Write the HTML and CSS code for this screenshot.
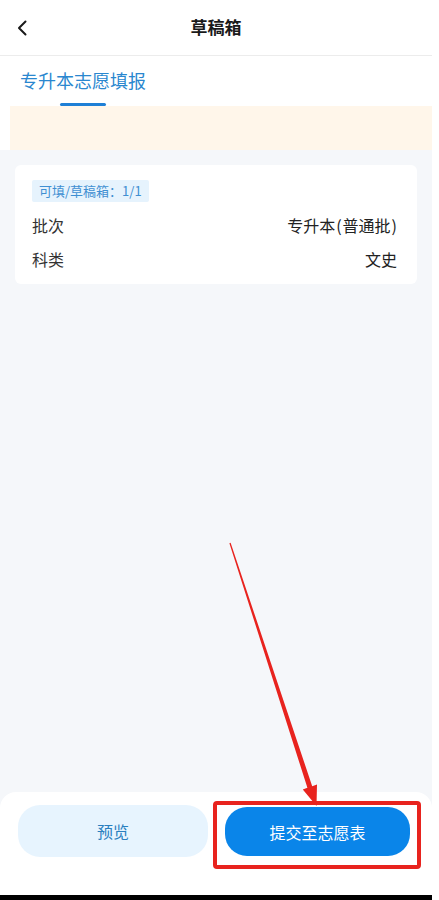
FILE: index.html
```html
<!DOCTYPE html>
<html lang="zh-CN">
<head>
    <meta charset="UTF-8">
    <meta name="viewport" content="width=device-width, initial-scale=1.0">
    <title>草稿箱</title>
    <link rel="stylesheet" href="styles.css">
</head>
<body>
    <div id="main">
        <div class="header">
            <div class="back">
                <svg width="10" height="16" viewBox="0 0 10 16"><path d="M8.5 1.5 L2 8 L8.5 14.5" fill="none" stroke="#1a1a1a" stroke-width="2" stroke-linecap="round" stroke-linejoin="round"/></svg>
            </div>
            <p class="title">草稿箱</p>
        </div>
        <div class="tabs">
            <div class="tab">
                <p>专升本志愿填报</p>
                <span class="line"></span>
            </div>
        </div>
        <div class="notice"></div>
        <div class="body">
            <div class="content">
                <div class="card">
                    <span class="tag">可填/草稿箱：1/1</span>
                    <div class="row">
                        <p>批次</p>
                        <p class="val">专升本<span class="pr">(</span>普通批<span class="pr end">)</span></p>
                    </div>
                    <div class="row">
                        <p>科类</p>
                        <p class="val">文史</p>
                    </div>
                </div>
            </div>
            <div class="footer">
                <button class="btn preview">预览</button>
                <div class="mark">
                    <button class="btn submit">提交至志愿表</button>
                </div>
            </div>
        </div>
        <div class="homebar"></div>

        <!-- red arrow drawn over the page -->
        <svg class="arrow" width="439" height="900" viewBox="0 0 439 900">
            <polygon points="229.4,543.2 230.6,542.8 312.2,786.2 317,784.5 316.5,806 302.8,789.4 307.4,787.8" fill="#e8231e"/>
        </svg>
    </div>
</body>
</html>
```

FILE: styles.css
```css
*
{
    box-sizing: border-box;
}
body
{
    margin: 0;
    background-color: #fff;
    font-family: "Noto Sans CJK SC", "Noto Sans", sans-serif;
}
p
{
    margin: 0;
}
#main
{
    width: 432px;
    height: 900px;
    display: flex;
    flex-direction: column;
    position: relative;
}
.header
{
    height: 56px;
    border-bottom: 1px solid #ececec;
    display: flex;
    align-items: center;
    justify-content: center;
    position: relative;
}
.back
{
    position: absolute;
    left: 17px;
    top: 17px;
}
.title
{
    font-size: 17px;
    font-weight: 700;
    color: #1a1a1a;
    margin-top: -2px;
}
.tabs
{
    height: 50px;
    padding-left: 20px;
}
.tab
{
    display: inline-flex;
    flex-direction: column;
    align-items: center;
}
.tab>p
{
    font-size: 18px;
    line-height: 26px;
    margin-top: 11px;
    color: #2a87cf;
}
.tab>.line
{
    width: 46px;
    height: 3px;
    border-radius: 2px;
    background-color: #1e7fd6;
    margin-top: 10px;
}
.notice
{
    height: 44px;
    margin-left: 10px;
    background-color: #fff6ea;
}
.body
{
    flex: 1;
    display: flex;
    flex-direction: column;
    background-color: #f5f7fa;
}
.content
{
    flex: 1;
    padding: 15px;
}
.card
{
    background-color: #fff;
    border-radius: 6px;
    padding: 15px 20px 8px 17px;
    display: flex;
    flex-direction: column;
    align-items: flex-start;
}
.tag
{
    height: 22px;
    line-height: 22px;
    padding: 0 7px;
    font-size: 13px;
    color: #3f8fd2;
    background-color: #e6f3fd;
    border-radius: 2px;
}
.row
{
    align-self: stretch;
    display: flex;
    justify-content: space-between;
    font-size: 16px;
    line-height: 34px;
    color: #333;
}
.tag+.row
{
    margin-top: 6px;
}
.row>.val
{
    color: #222;
}
.row .pr
{
    margin: 0 1px;
}
.row .pr.end
{
    margin-right: 0;
}
.footer
{
    height: 103px;
    background-color: #fff;
    border-radius: 16px 16px 0 0;
    display: flex;
    padding: 13px 0 0 18px;
    gap: 17px;
}
.btn
{
    height: 52px;
    border: none;
    border-radius: 22px;
    font-family: "Noto Sans CJK SC", sans-serif;
    font-size: 16px;
}
.preview
{
    width: 190px;
    background-color: #e7f4fe;
    color: #2a7fbf;
}
.mark
{
    position: relative;
}
.mark::after
{
    content: "";
    position: absolute;
    left: -12px;
    top: -4px;
    width: 200px;
    height: 60px;
    border: 4px solid #e8231e;
    border-radius: 4px;
}
.submit
{
    width: 185px;
    height: 49px;
    margin-top: 2px;
    background-color: #0a85e9;
    color: #fff;
}
.homebar
{
    height: 5px;
    background-color: #000;
}
.arrow
{
    position: absolute;
    left: 0;
    top: 0;
    pointer-events: none;
}
```
